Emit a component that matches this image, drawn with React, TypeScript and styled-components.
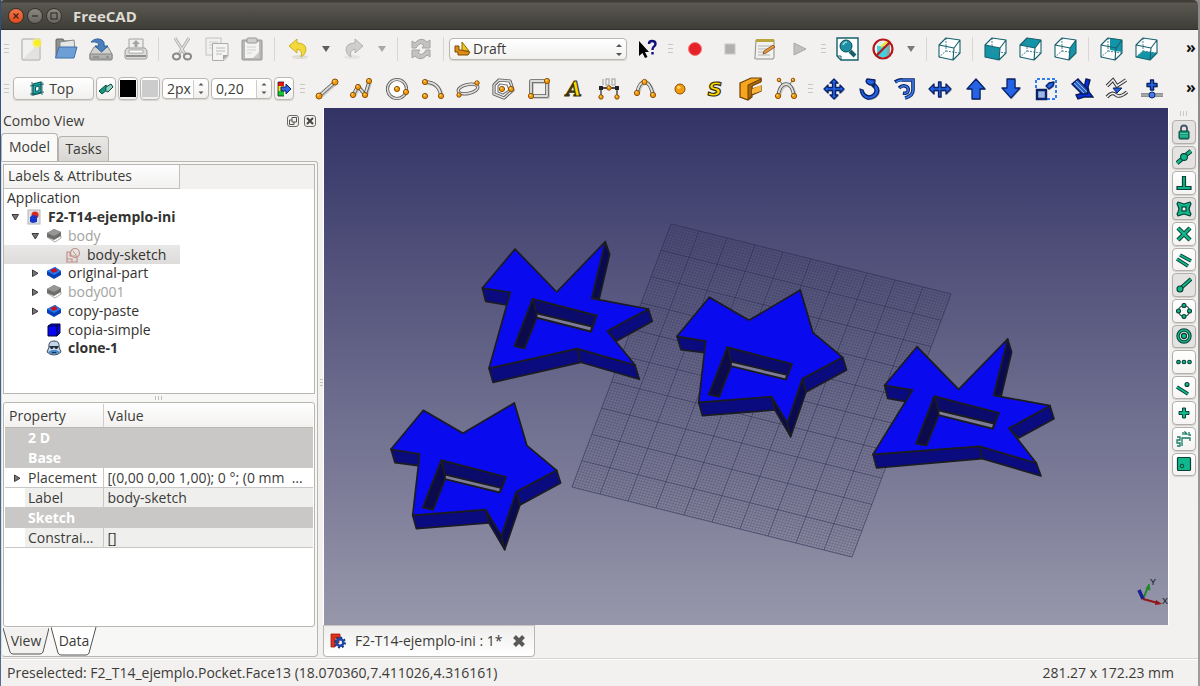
import React from 'react';
import styled, { createGlobalStyle, css } from 'styled-components';

const GlobalStyle = createGlobalStyle`
  * { box-sizing: border-box; }
  body {
    margin: 0;
    font-family: "Open Sans", "Noto Sans", sans-serif;
    font-size: 14px;
    line-height: 20px;
    color: #3c3b37;
  }
  button, input, select { font: inherit; color: inherit; }
`;

/* ---------- window frame ---------- */

const Window = styled.div`
  position: relative;
  display: flex;
  flex-direction: column;
  min-height: 100vh;
  padding-right: 2px;
  background: linear-gradient(#8a8a88, #9c9c9a);

  &::before {
    content: "";
    position: absolute;
    inset: 0 auto 0 0;
    width: 1px;
    background: linear-gradient(#2b4f82, #4f6f92);
  }
`;

const TitleBar = styled.header`
  display: flex;
  align-items: center;
  height: 30px;
  padding: 3px 8px 0;
  gap: 3px;
  border-bottom: 1px solid #2f2e2a;
  border-radius: 5px 5px 0 0;
  background: linear-gradient(#3f3e38 0, #3f3e38 2px, #5a5850 3px, #3f3e39 28px);
`;

const WindowButton = styled.button<{ $close?: boolean }>`
  display: grid;
  place-items: center;
  width: 16px;
  height: 16px;
  padding: 0;
  border: 1px solid #33322e;
  border-radius: 50%;
  background: ${(p) => (p.$close ? 'linear-gradient(#f4764c, #df4a1c)' : 'linear-gradient(#8b897f, #66645c)')};
`;

const Title = styled.h1`
  margin: 0 0 0 8px;
  font-size: 15px;
  line-height: 20px;
  font-weight: 700;
  color: #dfdbd2;
`;

/* ---------- toolbars ---------- */

const ToolBar = styled.div`
  display: flex;
  align-items: center;
  height: 39px;
  background: #f2f1f0;
`;

const MainToolBar = styled(ToolBar)`
  padding-bottom: 2px;
`;

const Tool = styled.button`
  display: grid;
  place-items: center;
  flex: none;
  width: 35px;
  height: 30px;
  padding: 0;
  border: 0;
  background: none;
`;

const ToolGroup = styled.div<{ $count: number }>`
  display: flex;
  flex: ${(p) => p.$count} 1 0;
  min-width: 0;

  ${Tool} {
    flex: 1 1 0;
    width: auto;
  }
`;

const Drop = styled(Tool)`
  width: 21px;
`;

const Separator = styled.span`
  flex: none;
  width: 1px;
  height: 24px;
  margin: 0 5px;
  background: #d9d6d3;
`;

const Grip = styled.span`
  flex: none;
  width: 5px;
  height: 10px;
  margin: 0 4px;
  background: repeating-linear-gradient(#c9c6c3 0, #c9c6c3 1px, transparent 1px, transparent 4px);
`;

const Overflow = styled.button`
  flex: none;
  width: 28px;
  margin-left: auto;
  padding: 0 0 3px 16px;
  border: 0;
  background: none;
  font-size: 16px;
  font-weight: 700;
  text-align: left;
  color: #111;
`;

const field = css`
  border: 1px solid #bab6b2;
  border-radius: 4px;
  background: linear-gradient(#ffffff, #f1f0ef);
  box-shadow: 0 1px 1px #d6d3d0;
`;

const Combo = styled.div`
  position: relative;
  flex: none;
  width: 178px;
  margin-right: 2px;

  select {
    ${field}
    width: 100%;
    height: 22px;
    padding: 0 20px 0 23px;
    line-height: 20px;
    appearance: none;
  }
  svg:first-child { position: absolute; left: 5px; top: 3px; }
  svg:last-child { position: absolute; right: 4px; top: 5px; }
  svg { pointer-events: none; }
`;

const PlaneButton = styled.button`
  ${field}
  display: flex;
  align-items: center;
  justify-content: center;
  gap: 4px;
  width: 81px;
  height: 23px;
  margin-right: 2px;
  padding: 0 4px 0 0;
`;

const SmallButton = styled.button`
  ${field}
  display: grid;
  place-items: center;
  width: 20px;
  height: 23px;
  margin-right: 2px;
  padding: 0;
`;

const Swatch = styled.span<{ $color: string }>`
  width: 16px;
  height: 17px;
  background: ${(p) => p.$color};
`;

const Spin = styled.label<{ $width: number }>`
  ${field}
  display: flex;
  align-items: center;
  width: ${(p) => p.$width}px;
  height: 21px;
  margin-right: 2px;

  input {
    flex: 1;
    min-width: 0;
    height: 18px;
    padding: 0 0 0 4px;
    border: 0;
    border-right: 1px solid #cfccc9;
    background: #fff;
    border-radius: 4px 0 0 4px;
    outline: 0;
  }
  svg { flex: none; margin: 0 3px; }
`;

/* ---------- work area ---------- */

const Body = styled.main`
  display: flex;
  flex: 1;
  background: #f2f1f0;
`;

const Dock = styled.section`
  display: flex;
  flex-direction: column;
  flex: none;
  width: 318px;
  padding-left: 1px;
`;

const DockHeader = styled.div`
  display: flex;
  align-items: center;
  gap: 5px;
  height: 25px;
  padding: 0 2px;

  h2 {
    flex: 1;
    margin: 0;
    font-size: 14px;
    line-height: 20px;
    font-weight: 400;
  }
`;

const DockButton = styled.button`
  display: grid;
  place-items: center;
  width: 12px;
  height: 12px;
  padding: 0;
  border: 1px solid #6d6b67;
  border-radius: 3px;
  background: none;
`;

const Tabs = styled.div`
  display: flex;
  align-items: flex-end;
  height: 28px;
`;

const Tab = styled.button<{ $active?: boolean }>`
  width: ${(p) => (p.$active ? 57 : 51)}px;
  height: ${(p) => (p.$active ? 28 : 25)}px;
  padding: 0 0 1px;
  border: 1px solid #b5b2ae;
  border-bottom: 0;
  border-radius: 4px 4px 0 0;
  background: ${(p) => (p.$active ? '#f9f9f8' : 'linear-gradient(#e9e8e6, #d9d7d4)')};
`;

const Pane = styled.div`
  display: flex;
  flex-direction: column;
  flex: 1;
  margin-bottom: 1px;
  padding: 2px 2px 0 1px;
  border: 1px solid #b9b6b2;
  border-left-color: #dedcda;
  border-radius: 0 3px 4px 4px;
  background: #f7f7f6;
`;

const TreeBox = styled.div`
  flex: 232 1 0;
  border: 1px solid #b9b6b2;
  background: #fff;
`;

const TreeHeader = styled.div`
  height: 24px;
  background: #f2f1f0;

  span {
    display: block;
    width: 176px;
    height: 24px;
    padding: 1px 4px;
    border: solid #c4c1bd;
    border-width: 0 1px 1px 0;
    background: linear-gradient(#fefefe, #f2f1f0);
  }
`;

const Tree = styled.ul`
  margin: 0;
  padding: 0;
  list-style: none;
`;

type Tone = 'normal' | 'bold' | 'dim';

const TreeRow = styled.li<{ $indent: number; $tone?: Tone; $selected?: boolean }>`
  display: flex;
  align-items: center;
  width: 176px;
  height: 19px;
  padding-left: ${(p) => p.$indent}px;
  white-space: nowrap;
  line-height: 18px;
  font-weight: ${(p) => (p.$tone === 'bold' ? 700 : 400)};
  color: ${(p) => (p.$tone === 'dim' ? '#a3a2a0' : '#333230')};
  background: ${(p) => (p.$selected ? 'linear-gradient(#e9e8e6, #dedcda)' : 'none')};

  &:nth-child(4n + 1) { height: 18px; }
`;

const Expander = styled.button`
  display: grid;
  place-items: center;
  width: 12px;
  height: 16px;
  margin-right: 5px;
  padding: 0;
  border: 0;
  background: none;
`;

const NodeIcon = styled.span`
  display: grid;
  width: 16px;
  margin-right: 6px;
`;

const Splitter = styled.div`
  display: flex;
  align-items: center;
  justify-content: center;
  height: 8px;

  span {
    width: 8px;
    height: 4px;
    background: repeating-linear-gradient(90deg, #c2bfbb 0, #c2bfbb 1px, transparent 1px, transparent 3px);
  }
`;

const PropertyBox = styled.div`
  flex: 225 1 0;
  padding: 1px;
  border: 1px solid #b9b6b2;
  border-radius: 3px;
  background: #fff;
`;

const PropertyTable = styled.table`
  width: 100%;
  border-collapse: collapse;
  table-layout: fixed;

  th, td {
    height: 20px;
    padding: 0 0 0 4px;
    overflow: hidden;
    font-weight: 400;
    line-height: 18px;
    text-align: left;
    white-space: nowrap;
    text-overflow: ellipsis;
  }
  thead th {
    height: 24px;
    padding-top: 1px;
    border-bottom: 1px solid #b9b6b2;
    background: linear-gradient(#fefefe, #f2f1f0);
  }
  thead th:first-child { width: 98px; border-right: 1px solid #cfccc9; }
`;

const GroupRow = styled.tr`
  th {
    padding-left: 23px;
    border: 0;
    background: #c9c8c6;
    color: #fff;
    font-weight: 700;
  }
`;

const PropertyRow = styled.tr<{ $shade?: boolean }>`
  background: ${(p) => (p.$shade ? 'linear-gradient(90deg, #fff 20px, #efefee 20px)' : '#fff')};

  th {
    border-right: 1px solid #c9c8c6;
    border-bottom: 1px solid #c9c8c6;
  }
  td {
    border-bottom: 1px solid #c9c8c6;
    padding-right: 8px;
  }
`;

const NameCell = styled.div`
  display: flex;
  align-items: center;

  span {
    overflow: hidden;
    text-overflow: ellipsis;
  }
`;

const ToggleSlot = styled.i`
  display: grid;
  flex: none;
  width: 19px;
  padding-left: 4px;
`;

const BottomTabs = styled.div`
  display: flex;
  height: 29px;
`;

const BottomTab = styled.button`
  position: relative;
  width: 46px;
  margin-right: 2px;
  padding: 0 0 2px;
  border: 0;
  background: none;
  isolation: isolate;

  svg { position: absolute; left: 0; top: 0; z-index: -1; }
`;

const Handle = styled.div`
  flex: none;
  display: grid;
  align-items: center;
  width: 5px;
  padding-left: 2px;

  span {
    width: 3px;
    height: 8px;
    background: repeating-linear-gradient(#c2bfbb 0, #c2bfbb 1px, transparent 1px, transparent 3px);
  }
`;

const ViewColumn = styled.section`
  display: flex;
  flex-direction: column;
  flex: 1;
  min-width: 0;
`;

const Viewport = styled.div`
  display: flex;
  flex: 1;
  min-height: 0;
  border-left: 1px solid #fff;
  border-right: 1px solid #fff;
  background: linear-gradient(#333366, #9797ab);

  svg { display: block; width: 100%; }
`;

const DocumentTabs = styled.div`
  height: 33px;
  padding-bottom: 1px;
`;

const DocumentTab = styled.div`
  display: flex;
  align-items: center;
  gap: 9px;
  width: 212px;
  height: 32px;
  padding-left: 6px;
  border: 1px solid #bab6b2;
  border-top-color: #c9c6c3;
  border-radius: 0 0 4px 4px;
  background: linear-gradient(#efeeed, #fff);
  white-space: nowrap;

  button {
    display: grid;
    padding: 0;
    border: 0;
    background: none;
  }
`;

const SnapBar = styled.aside`
  display: flex;
  flex-direction: column;
  align-items: center;
  flex: none;
  width: 29px;
  padding-top: 3px;
`;

const SnapGrip = styled.span`
  flex: none;
  width: 8px;
  height: 5px;
  margin-bottom: 4px;
  background: repeating-linear-gradient(90deg, #c9c6c3 0, #c9c6c3 1px, transparent 1px, transparent 3px);
`;

const SnapList = styled.div`
  display: flex;
  flex-direction: column;
  gap: 2px;
  height: 356px;
`;

const SnapButton = styled.button<{ $on?: boolean }>`
  display: grid;
  place-items: center;
  flex: 1 1 0;
  width: 24px;
  min-height: 0;
  padding: 0;
  border: 1px solid #b3afab;
  border-radius: 4px;
  background: ${(p) => (p.$on ? '#e5e3e1' : 'linear-gradient(#fff, #f5f4f3)')};
  box-shadow: 0 1px 1px #d3d0cd;
`;

const StatusBar = styled.footer`
  display: flex;
  align-items: center;
  justify-content: space-between;
  height: 28px;
  padding: 1px 24px 0 7px;
  border-top: 1px solid #d6d3d0;
  box-shadow: inset 0 1px #fff;
  background: #f2f1f0;
`;

/* ---------- drawing helpers ---------- */

type Pt = [number, number];

const Svg = ({ size = 24, children }: { size?: number; children: React.ReactNode }) => (
  <svg width={size} height={size} viewBox={`0 0 ${size} ${size}`} fill="none" aria-hidden="true">
    {children}
  </svg>
);

const Tube = ({ d }: { d: string }) => (
  <g fill="none" strokeLinejoin="round">
    <path d={d} stroke="#c9c8c6" strokeWidth="4" transform="translate(1 1)" />
    <path d={d} stroke="#5a5a58" strokeWidth="3.600" />
    <path d={d} stroke="#dededc" strokeWidth="1.800" />
  </g>
);

const Dots = ({ at, r = 2.6 }: { at: Pt[]; r?: number }) => (
  <>
    {at.map(([x, y], i) => (
      <g key={i}>
        <circle cx={x} cy={y} r={r} fill="#f59a0a" stroke="#8a5206" strokeWidth="1" />
        <circle cx={x - r / 4} cy={y - r / 3} r={r / 3} fill="#ffd37a" />
      </g>
    ))}
  </>
);

const Blue = ({ d }: { d: string }) => (
  <>
    <path d={d} transform="translate(1 1)" fill="#8c8c90" opacity=".6" />
    <path d={d} fill="#2463e4" stroke="#0a2268" strokeWidth="1.3" strokeLinejoin="round" />
  </>
);

const cubeFaces = {
  none: '',
  front: 'M1 8L16 11L15 23L1 20Z',
  top: 'M8 1L22 3L16 11L1 8Z',
  right: 'M22 3L22 16L15 23L16 11Z',
  rear: 'M10 1L22 3L22 15L10 13Z',
  bottom: 'M8 14L22 16L15 23L1 20Z',
};

const Cube = ({ face }: { face: keyof typeof cubeFaces }) => (
  <Svg>
    <path d="M8 1L22 3L22 16L15 23L1 20L1 8Z" fill="#fff" />
    {face !== 'none' && <path d={cubeFaces[face]} fill="#1295a8" />}
    <path d="M8 1V14L1 20M8 14L22 16" stroke="#4b8790" strokeWidth="1" strokeDasharray="2 1" />
    <path d="M8 1L22 3L22 16L15 23L1 20L1 8ZM1 8L16 11L22 3M16 11L15 23" stroke="#16606c" strokeWidth="1.1" strokeLinejoin="round" />
  </Svg>
);

const Arrow = ({ color = '#5f5e5b' }: { color?: string }) => (
  <svg width="8" height="6" viewBox="0 0 8 6" aria-hidden="true">
    <path d="M0 0H8L4 6Z" fill={color} />
  </svg>
);

const UpDown = () => (
  <svg width="8" height="13" viewBox="0 0 8 13" aria-hidden="true">
    <path d="M1.500 3.500L4 1L6.500 3.500ZM1.500 9.500L4 12L6.500 9.500Z" fill="#55534f" />
  </svg>
);

/* ---------- icon tables ---------- */

const fileTools: [string, React.ReactNode][] = [
  ['New', <Svg><rect x="3" y="2" width="18" height="21" rx="1" fill="#f1f1f0" stroke="#a7a6a3" /><path d="M4 22L20 6V22Z" fill="#e2e2e0" /><circle cx="18" cy="6" r="5" fill="#f8f06a" opacity=".7" /><circle cx="18" cy="6" r="3" fill="#fbef1d" /></Svg>],
  ['Open', <Svg><path d="M2 20L2 3Q2 2 3 2H9L10 4H18V12" fill="#8f8f8c" stroke="#666" /><path d="M6 5L20 3L21 13H6Z" fill="#e6e6e4" stroke="#8a8a88" /><path d="M5 10H23L20 21H1.500Z" fill="#6d9fd6" stroke="#3f6fa8" /></Svg>],
  ['Save', <Svg><path d="M5 10H19L23 17V22Q23 23 22 23H2Q1 23 1 22V17Z" fill="#d2d2cf" stroke="#888" /><path d="M1 17H23V22H1Z" fill="#b1b1ad" stroke="#888" /><path d="M4 20H10M17 20H20" stroke="#777" /><path d="M2 5Q7 0 13 3Q16 5 15 9H19L12.500 15L6 9H10Q10 4 2 5Z" fill="#4a80bd" stroke="#2d5d94" /></Svg>],
  ['Print', <Svg><path d="M5 2H19V13H5Z" fill="#eee" stroke="#a3a3a1" /><path d="M12 3L8 7H10.500V10H13.500V7H16Z" fill="#a3a3a1" /><path d="M3 11H21L23 14V20Q23 22 21 22H3Q1 22 1 20V14Z" fill="#dcdcda" stroke="#999" /><path d="M5 13H19V16H5Z" fill="#fff" stroke="#aaa" /><path d="M2 19H22" stroke="#8f8f8d" strokeWidth="2" /></Svg>],
];

const editTools: [string, React.ReactNode][] = [
  ['Cut', <Svg><path d="M5 1L15 17M19 1L9 17" stroke="#aaa9a7" strokeWidth="3" /><path d="M5 1L15 17M19 1L9 17" stroke="#e4e4e2" strokeWidth="1.4" /><ellipse cx="6.500" cy="19.500" rx="3.600" ry="3" stroke="#8b8a88" strokeWidth="2" /><ellipse cx="17.500" cy="19.500" rx="3.600" ry="3" stroke="#8b8a88" strokeWidth="2" /></Svg>],
  ['Copy', <Svg><rect x="1" y="1" width="15" height="17" fill="#f0f0ee" stroke="#c3c2c0" /><path d="M4 5H13M4 8H13M4 11H10" stroke="#ccc" /><path d="M7.500 6.500H23V19L19 23.500H7.500Z" fill="#f4f4f3" stroke="#adaba9" /><path d="M11 11H20M11 14H20M11 17H17" stroke="#bdbcba" /><path d="M23 18L18 23V18Z" fill="#a4a3a1" /></Svg>],
  ['Paste', <Svg><rect x="2" y="3" width="20" height="20" rx="1" fill="#b9b8b6" stroke="#979694" /><path d="M5 5H19V21H5Z" fill="#f3f3f2" /><path d="M19 15V21H13Z" fill="#c9c9c7" /><rect x="7" y="1" width="10" height="5" rx="1" fill="#cfcfcd" stroke="#999" /><path d="M7 10H16M7 13H16M7 16H12" stroke="#d2d2d0" /></Svg>],
];

const draftTools: [string, React.ReactNode][] = [
  ['Line', <Svg><Tube d="M4 19L20 5" /><Dots at={[[4, 19], [20, 5]]} r={3} /></Svg>],
  ['Wire', <Svg><Tube d="M3 18L8 9L15 18L19 5" /><Dots at={[[3, 18], [8, 10], [15, 18], [19, 4]]} /></Svg>],
  ['Circle', <Svg><circle cx="12" cy="12" r="9.500" stroke="#5a5a58" strokeWidth="3.200" fill="#fff" /><circle cx="12" cy="12" r="9.500" stroke="#dededc" strokeWidth="1.600" /><Dots at={[[12, 12], [21, 15]]} /></Svg>],
  ['Arc', <Svg><Tube d="M4 5Q18 5 20 19" /><Dots at={[[4, 5], [20, 19], [4, 19]]} /></Svg>],
  ['Ellipse', <Svg><g transform="rotate(-12 12 12)"><ellipse cx="12" cy="12" rx="10" ry="4.500" stroke="#5a5a58" strokeWidth="3.200" /><ellipse cx="12" cy="12" rx="10" ry="4.500" stroke="#dededc" strokeWidth="1.600" /></g><Dots at={[[21, 6], [3, 18]]} r={2.200} /></Svg>],
  ['Polygon', <Svg><path d="M8 3L19 4L22 13L13 21L3 17L3 8Z" stroke="#5a5a58" strokeWidth="3.200" strokeLinejoin="round" fill="#fff" /><path d="M8 3L19 4L22 13L13 21L3 17L3 8Z" stroke="#dededc" strokeWidth="1.400" strokeLinejoin="round" /><path d="M9 7L16 8L18 13L12 17L7 15V9Z" stroke="#777" strokeWidth="1.200" /><Dots at={[[11, 12], [20, 12]]} /></Svg>],
  ['Rectangle', <Svg><Tube d="M4 4H20V19H4Z" /><Dots at={[[4, 19], [20, 4]]} /></Svg>],
  ['Text', <Svg><text x="12" y="19" textAnchor="middle" fontFamily="DejaVu Serif, serif" fontStyle="italic" fontWeight="700" fontSize="20" fill="#ffd900" stroke="#3a3208" strokeWidth="1.200">A</text></Svg>],
  ['Dimension', <Svg><path d="M4 11V20M20 11V20" stroke="#777" strokeWidth="2" /><path d="M4 11H20" stroke="#222" strokeWidth="1.600" /><path d="M6 2V8M9 2H12V8H9ZM15 2H18V8H15Z" stroke="#b5b5b2" strokeWidth="1.400" /><Dots at={[[4, 20], [20, 20], [12, 11]]} r={2.200} /><path d="M2 9H6V13H2ZM18 9H22V13H18Z" fill="#222" /></Svg>],
  ['B-spline', <Svg><Tube d="M4 16Q6 5 11.500 5Q17 5 20 18" /><Dots at={[[4, 16], [11.500, 5], [20, 18]]} /></Svg>],
  ['Point', <Svg><Dots at={[[12, 12]]} r={5} /></Svg>],
  ['ShapeString', <Svg><text x="12" y="19" textAnchor="middle" fontFamily="DejaVu Sans, sans-serif" fontStyle="italic" fontWeight="700" fontSize="20" fill="#ffd900" stroke="#3a3208" strokeWidth="1.200">S</text></Svg>],
  ['Facebinder', <Svg><path d="M1 6L12 1H22V4L13 8V12L22 9V14L13 18V20L9 23L1 20Z" fill="#f7a51c" stroke="#6b3f06" strokeWidth="1.200" /><path d="M9 8L22 2V5L13 9V18L9 23Z" fill="#a8660c" stroke="#6b3f06" /><path d="M13 12L22 8V14L13 17Z" fill="#f9b53c" /></Svg>],
  ['BezCurve', <Svg><path d="M5 3L9 8M19 3L15 8" stroke="#666" /><Tube d="M4 19Q6 7 12 7Q18 7 20 19" /><Dots at={[[4, 19], [20, 19]]} /><Dots at={[[5, 3], [19, 3]]} r={1.800} /></Svg>],
];

const modTools: [string, React.ReactNode][] = [
  ['Move', <Svg><Blue d="M12 2L16 6H13.500V10.500H18V8L22 12L18 16V13.500H13.500V18H16L12 22L8 18H10.500V13.500H6V16L2 12L6 8V10.500H10.500V6H8Z" /></Svg>],
  ['Rotate', <Svg><Blue d="M9 2L17 3L16 10L14 8Q9 8 8 4ZM16 6Q23 11 20 17Q16 23 9 22Q3 20 2 12L5 13Q6 18 11 19Q16 18 17 14Q17 11 14 9Z" /></Svg>],
  ['Offset', <Svg><path d="M2 5Q6 2 10 3H20V13Q20 19 12 21" stroke="#0a2268" strokeWidth="3.600" /><path d="M3 5Q6 3 10 3H20V13Q20 19 12 21" stroke="#3c7dea" strokeWidth="1.600" /><path d="M6 11Q9 8 12 9Q16 10 15 14Q14 17 10 16" stroke="#0a2268" strokeWidth="3.600" /><path d="M7 11Q9 8 12 9Q16 10 15 14Q14 17 11 16" stroke="#3c7dea" strokeWidth="1.600" /></Svg>],
  ['Trimex', <Svg><Blue d="M1 12L6 7V10.500H10.500V5H13V10.500H18V7L23 12L18 17V13.500H13V20H10.500V13.500H6V17Z" /></Svg>],
  ['Upgrade', <Svg><Blue d="M12 2L21 12H16V22H8V12H3Z" /></Svg>],
  ['Downgrade', <Svg><Blue d="M8 2H16V11H21L12 21L3 11H8Z" /></Svg>],
  ['Scale', <Svg><path d="M2 11V2H22V22H13" stroke="#2f7cf5" strokeWidth="2" strokeDasharray="3 2" /><path d="M3 13H12V22H3Z" fill="#9db6e6" stroke="#0a2268" strokeWidth="2.400" /><Blue d="M12 9L15 6L20 5L19 9L15 12Z" /></Svg>],
  ['Edit', <Svg><path d="M16 2L20 3L18 10L19 15L23 20L14 20L8 22L6 18L13 16Z" fill="#0b2fe0" stroke="#081b57" strokeWidth="1.400" /><path d="M2 7L8 2L18 13L17 17L12 17Z" fill="#2a62c8" stroke="#081b57" strokeWidth="1.400" /><path d="M4 6L14 16M6 4L17 15" stroke="#8fb4ef" /></Svg>],
  ['Wire to B-spline', <Svg><path d="M2 9L8 3L12 9L21 3M2 20Q7 14 11 18Q15 21 22 15" stroke="#333" strokeWidth="3.600" /><path d="M2 9L8 3L12 9L21 3M2 20Q7 14 11 18Q15 21 22 15" stroke="#eee" strokeWidth="1.600" /><path d="M8 11H17L12 16Z" fill="#1f5fe0" stroke="#0a2268" /></Svg>],
  ['Add point', <Svg><path d="M1 18H23" stroke="#777" strokeWidth="3.600" /><path d="M1 18H23" stroke="#bbb" strokeWidth="1.400" /><Blue d="M10.500 3H13.500V6.500H17V9.500H13.500V13H10.500V9.500H7V6.500H10.500Z" /><circle cx="12" cy="18" r="3" fill="#3d7ff0" stroke="#0a2268" /></Svg>],
];

const GreenLine = ({ d, w = 4.4 }: { d: string; w?: number }) => (
  <>
    <path d={d} stroke="#0a3f33" strokeWidth={w} />
    <path d={d} stroke="#10b78c" strokeWidth={w - 2} />
  </>
);

const GreenDots = ({ at, r = 2 }: { at: Pt[]; r?: number }) => (
  <>
    {at.map(([x, y], i) => (
      <circle key={i} cx={x} cy={y} r={r} fill="#10b78c" stroke="#0a3f33" strokeWidth="1.100" />
    ))}
  </>
);

const snaps: [string, boolean, React.ReactNode][] = [
  ['Snap lock', true, <Svg size={16}><path d="M5 8V4.500Q5 1.500 8 1.500Q11 1.500 11 4.500V8" stroke="#456" strokeWidth="1.800" /><rect x="3" y="7" width="10" height="8" rx="1" fill="#12977a" stroke="#0a3f33" /><path d="M4 9.500H12M4 12H12" stroke="#4cc9a8" /></Svg>],
  ['Snap midpoint', true, <Svg size={16}><GreenLine d="M1 14L6 10M10 6L15 2" /><GreenDots at={[[8, 8]]} r={3.400} /></Svg>],
  ['Snap perpendicular', false, <Svg size={16}><path d="M6.500 1.500H9.500V11.500H15V14.500H1V11.500H6.500Z" fill="#10b78c" stroke="#0a3f33" strokeWidth="1.200" /></Svg>],
  ['Snap grid', true, <Svg size={16}><path d="M2 1L5 2L8 3L11 2L14 1L15 3L14 5L13 8L14 11L15 13L14 15L11 14L8 13L5 14L2 15L1 13L2 11L3 8L2 5L1 3Z" fill="#10b78c" stroke="#0a3f33" strokeWidth="1.200" strokeLinejoin="round" /><rect x="6" y="6" width="4" height="4" fill="#f2f1f0" stroke="#0a3f33" strokeWidth="1.200" /></Svg>],
  ['Snap intersection', false, <Svg size={16}><GreenLine d="M2 2L14 14M14 2L2 14" /><path d="M3 3L13 13" stroke="#10b78c" strokeWidth="2.200" /></Svg>],
  ['Snap parallel', false, <Svg size={16}><GreenLine d="M4 3L15 9M1 7L12 14" w={3.600} /></Svg>],
  ['Snap endpoint', true, <Svg size={16}><GreenLine d="M5 11L15 2" w={3.800} /><GreenDots at={[[4, 12]]} r={3} /></Svg>],
  ['Snap angle', false, <Svg size={16}><circle cx="8" cy="8" r="5.500" stroke="#234b43" strokeWidth="1.200" /><GreenDots at={[[8, 2.500], [2.500, 8], [13.500, 8], [8, 13.500]]} /></Svg>],
  ['Snap center', true, <Svg size={16}><circle cx="8" cy="8" r="6" stroke="#0a3f33" strokeWidth="3.400" /><circle cx="8" cy="8" r="6" stroke="#10b78c" strokeWidth="1.400" /><GreenDots at={[[8, 8]]} r={2.600} /></Svg>],
  ['Snap extension', false, <Svg size={16}><GreenDots at={[[2.500, 8], [8, 8], [13.500, 8]]} r={1.800} /></Svg>],
  ['Snap near', false, <Svg size={16}><GreenLine d="M1 7L12 14" w={3.600} /><GreenDots at={[[11, 4.500]]} /></Svg>],
  ['Snap ortho', false, <Svg size={16}><path d="M6.500 3H9.500V6.500H13V9.500H9.500V13H6.500V9.500H3V6.500H6.500Z" fill="#10b78c" stroke="#0a3f33" /></Svg>],
  ['Snap dimensions', false, <Svg size={16}><path d="M6 15V7H14V10M1 6H4V9H1V12H4V15H1M7 4V1M9 4V1L11 3V4M13 1V4H15" stroke="#167a64" strokeWidth="1.300" /></Svg>],
  ['Snap working plane', false, <Svg size={16}><rect x="1.500" y="1.500" width="13" height="13" rx="1" fill="#10b78c" stroke="#0a3f33" strokeWidth="1.200" /><circle cx="6" cy="10" r="1.800" fill="#10b78c" stroke="#0a3f33" /></Svg>],
];

/* ---------- tree ---------- */

const icons = {
  doc: <Svg size={16}><rect x="2" y="1" width="12" height="14" fill="#e1e1e4" stroke="#b5b5ba" /><circle cx="9" cy="6" r="3.600" fill="#d42a1e" /><path d="M4 8L7 6L11 7V13L7 14L4 13Z" fill="#1638c8" /></Svg>,
  pad: <Svg size={16}><path d="M1 9L9 14L15 10V8" fill="#fff" stroke="#aaa" /><path d="M1 5L8 1L15 4V8L8 12L1 9Z" fill="#6e6e6c" /><path d="M1 5L8 1L15 4L8 8Z" fill="#979795" /></Svg>,
  sketch: <Svg size={16}><path d="M2 5V15H12V9H5V5ZM2 12H7V15" stroke="#c09089" strokeWidth="1.200" /><circle cx="10" cy="6" r="4.500" stroke="#c09089" strokeWidth="1.200" /><path d="M8 4L11 8" stroke="#c09089" /></Svg>,
  pocket: <Svg size={16}><path d="M1 6L9 2L15 6V10L8 14L1 10Z" fill="#0a3eb5" /><path d="M1 6L9 2L15 6L8 10Z" fill="#1d7df2" /><path d="M4 5L9 3L12 6L7 8Z" fill="#c51322" /></Svg>,
  solid: <Svg size={16}><path d="M2 4L5 2H14V11L11 14H2Z" fill="#0808f0" stroke="#05052e" /><path d="M2 4H11V14M11 4L14 2" stroke="#05052e" /></Svg>,
  clone: <Svg size={16}><path d="M3 7Q2 1 8 1Q14 1 13 7L15 12Q12 15 8 15Q4 15 1 12Z" fill="#c3d6ea" stroke="#3b4a5c" /><path d="M3 6H13L11 9H9.500L8 7L6.500 9H5Z" fill="#222d3a" /><path d="M2 12L6 10H10L14 12L11 14H5Z" fill="#4a86c4" /><path d="M6 12.500H10" stroke="#1d3550" /></Svg>,
};

type Node = { label: string; icon?: keyof typeof icons; indent: number; tone?: Tone; open?: boolean; selected?: boolean; leaf?: boolean };

const nodes: Node[] = [
  { label: 'Application', indent: 3, leaf: true },
  { label: 'F2-T14-ejemplo-ini', icon: 'doc', indent: 5, tone: 'bold', open: true },
  { label: 'body', icon: 'pad', indent: 25, tone: 'dim', open: true },
  { label: 'body-sketch', icon: 'sketch', indent: 61, selected: true, leaf: true },
  { label: 'original-part', icon: 'pocket', indent: 25, open: false },
  { label: 'body001', icon: 'pad', indent: 25, tone: 'dim', open: false },
  { label: 'copy-paste', icon: 'pocket', indent: 25, open: false },
  { label: 'copia-simple', icon: 'solid', indent: 42, leaf: true },
  { label: 'clone-1', icon: 'clone', indent: 42, tone: 'bold', leaf: true },
];

const Twisty = ({ open }: { open?: boolean }) => (
  <svg width="8" height="8" viewBox="0 0 8 8" aria-hidden="true">
    <path d={open ? 'M1 1.500H7.500L4.300 7Z' : 'M1.500 1V7.500L7 4.300Z'} fill="#777" stroke="#3c3b37" />
  </svg>
);

/* ---------- 3D scene ---------- */

const corner = { x: 347, y: 116 };
const across = { x: 280, y: 70 };
const down = { x: -99, y: 263 };

const gridLines = (step: number) => {
  let d = '';
  for (let i = 0; i <= 100; i += step) {
    const t = i / 100;
    const ax = corner.x + across.x * t;
    const ay = corner.y + across.y * t;
    const bx = corner.x + down.x * t;
    const by = corner.y + down.y * t;
    d += `M${ax} ${ay}l${down.x} ${down.y}M${bx} ${by}l${across.x} ${across.y}`;
  }
  return d;
};

type Solid = { face: string; sides: string[]; dark: string[]; pocket: string; wallTop: string; wallLeft: string; slot: string };

const sharpStar: Solid = {
  face: '135,87 260,216 406,65 365,235 535,267 412,333 495,435 321,386 57,445 121,217 37,204',
  sides: ['37,204 121,217 109,255 47,244', '57,445 321,386 332,427 69,487', '321,386 495,435 508,478 332,427', '535,267 547,304 440,363 412,333'],
  dark: ['406,65 419,103 388,235 365,235'],
  pocket: '188,237 380,287 363,335 200,293 163,385 134,378',
  wallTop: '188,237 380,287 366,320 200,280',
  wallLeft: '188,237 200,280 200,293 163,385 134,378',
  slot: '200,280 366,320 362,334 200,293',
};

const wideStar: Solid = {
  face: '148,82 267,151 421,60 459,188 548,262 427,326 382,458 335,380 116,397 137,213 51,199',
  sides: ['51,199 137,213 132,248 63,239', '116,397 335,380 345,420 127,437', '427,326 548,262 560,300 438,366'],
  dark: ['335,380 382,458 392,500 345,420', '427,326 438,366 392,500 382,458'],
  pocket: '202,232 396,282 378,328 213,288 177,380 147,373',
  wallTop: '202,232 396,282 383,316 213,275',
  wallLeft: '202,232 213,275 213,288 177,380 147,373',
  slot: '213,275 381,315 377,328 213,288',
};

const longStar: Solid = {
  face: '171,80 296,208 443,57 401,226 570,257 447,325 529,429 359,379 39,403 158,210 74,196',
  sides: ['74,196 158,210 136,244 83,235', '39,403 359,379 367,416 50,444', '359,379 529,429 543,468 367,416', '570,257 582,296 476,354 447,325'],
  dark: ['443,57 455,96 424,227 401,226'],
  pocket: '223,229 417,279 399,326 236,285 199,376 169,370',
  wallTop: '223,229 417,279 402,311 235,271',
  wallLeft: '223,229 235,271 236,285 199,376 169,370',
  slot: '235,271 402,311 398,326 236,285',
};

const Star = ({ x, y, solid }: { x: number; y: number; solid: Solid }) => (
  <g transform={`translate(${x} ${y}) scale(.3333)`} stroke="#1b1b22" strokeWidth="5" strokeLinejoin="round">
    {solid.sides.map((p) => <polygon key={p} points={p} fill="#0b0b80" />)}
    {solid.dark.map((p) => <polygon key={p} points={p} fill="#0a0a52" />)}
    <polygon points={solid.face} fill="#0a0aee" />
    <polygon points={solid.pocket} fill="#0a0a52" />
    <polygon points={solid.wallTop} fill="#0b0b6c" />
    <polygon points={solid.wallLeft} fill="#0a0a4c" />
    <polygon points={solid.slot} fill="#7d7d97" />
  </g>
);

const Scene = () => (
  <svg viewBox="0 0 844 517" role="img" aria-label="3D view">
    <path d={gridLines(1)} stroke="#22223f" strokeOpacity=".25" strokeWidth=".7" fill="none" />
    <path d={gridLines(10)} stroke="#2a2a50" strokeOpacity=".45" strokeWidth="1" fill="none" />
    <Star x={146} y={112} solid={sharpStar} />
    <Star x={336} y={162} solid={wideStar} />
    <Star x={536} y={212} solid={longStar} />
    <Star x={50} y={275} solid={wideStar} />
    <path d="M819 491L824 479" stroke="#1f8a2a" strokeWidth="2" />
    <path d="M822 481L825 476L826 482Z" fill="#1f8a2a" stroke="#1f8a2a" />
    <path d="M819 491L815 482" stroke="#1d1d94" strokeWidth="3.500" />
    <path d="M819 491L834 495" stroke="#8f1717" strokeWidth="2" />
    <path d="M832 492L838 496L831 497Z" fill="#8f1717" />
    <g fontFamily="Liberation Sans, sans-serif" fontSize="9" fill="#111">
      <text x="826" y="477">Y</text>
      <text x="838" y="496">X</text>
    </g>
  </svg>
);

/* ---------- application ---------- */

const renderTools = (tools: [string, React.ReactNode][]) =>
  tools.map(([name, icon]) => (
    <Tool key={name} aria-label={name}>{icon}</Tool>
  ));

export default function App() {
  return (
    <>
      <GlobalStyle />
      <Window>
        <TitleBar>
          <WindowButton $close aria-label="Close window">
            <svg width="8" height="8" viewBox="0 0 8 8"><path d="M1.500 1.500L6.500 6.500M6.500 1.500L1.500 6.500" stroke="#4a2214" strokeWidth="1.300" /></svg>
          </WindowButton>
          <WindowButton aria-label="Minimize">
            <svg width="8" height="8" viewBox="0 0 8 8"><path d="M1 4H7" stroke="#33322e" strokeWidth="1.300" /></svg>
          </WindowButton>
          <WindowButton aria-label="Maximize">
            <svg width="8" height="8" viewBox="0 0 8 8"><rect x="1" y="1" width="6" height="6" fill="none" stroke="#33322e" strokeWidth="1.200" /></svg>
          </WindowButton>
          <Title>FreeCAD</Title>
        </TitleBar>

        <MainToolBar role="toolbar" aria-label="File">
          <Grip />
          {renderTools(fileTools)}
          <Separator />
          {renderTools(editTools)}
          <Separator />
          <Tool aria-label="Undo"><Svg><ellipse cx="14" cy="20" rx="8" ry="2" fill="#dedcd9" /><path d="M3 9L11 2V6Q20 6 20 13Q20 17 15 20Q17 13 11 12V16Z" fill="#f3d83a" stroke="#cdb02a" /></Svg></Tool>
          <Drop aria-label="Undo list"><Arrow /></Drop>
          <Tool aria-label="Redo"><Svg><ellipse cx="10" cy="20" rx="8" ry="2" fill="#e6e4e2" /><path d="M21 9L13 2V6Q4 6 4 13Q4 17 9 20Q7 13 13 12V16Z" fill="#cfcecc" stroke="#b3b2b0" /></Svg></Tool>
          <Drop aria-label="Redo list"><Arrow color="#aaa8a5" /></Drop>
          <Separator />
          <Tool aria-label="Refresh"><Svg><path d="M3 11V4L6 6Q12 -1 18 5L21 3V11H13L15 8Q12 5 9 8L7 11ZM3 13H11L9 16Q12 19 15 16L17 13H21V20L18 18Q12 25 6 19L3 21Z" fill="#c4c3c1" stroke="#a5a4a2" /></Svg></Tool>
          <Separator />
          <Combo>
            <svg width="17" height="16" viewBox="0 0 17 16" aria-hidden="true">
              <path d="M8 1V10H15Z" fill="#f0c419" stroke="#8a6c08" /><path d="M1 5H5V9H7L16 11L14 14H4V11H1Z" fill="#e08c12" stroke="#7d4a05" />
            </svg>
            <select aria-label="Workbench" defaultValue="Draft"><option>Draft</option></select>
            <svg width="8" height="14" viewBox="0 0 8 14" aria-hidden="true"><path d="M1 4H7L4 1ZM1 10H7L4 13Z" fill="#55534f" /></svg>
          </Combo>
          <Tool aria-label="What's this?">
            <Svg><path d="M4 4V19L7.500 16L10 21L12.500 20L10 15H14Z" fill="#000" /><path d="M14 7Q14 4 17 4Q20.500 4 20.500 7Q20.500 9 18.500 10Q17.500 11 17.500 13M17.500 15V17.500" stroke="#10107a" strokeWidth="2.400" /></Svg>
          </Tool>
          <Grip />
          <Tool aria-label="Record macro"><Svg><circle cx="12" cy="12" r="6.500" fill="#e62129" stroke="#f5797c" /></Svg></Tool>
          <Tool aria-label="Stop"><Svg><rect x="7" y="7" width="10" height="10" fill="#b1b0ae" stroke="#cbcac8" /></Svg></Tool>
          <Tool aria-label="Macros">
            <Svg><path d="M3 3H21V21L20 22H3Q1 22 2 20Z" fill="#f1f1ef" stroke="#8d8d8a" /><path d="M3 2H21V5H3Z" fill="#b9a53c" /><path d="M5 9H18M5 12H14M5 15H11M5 18H17" stroke="#b5b5b2" /><path d="M10 17L11 14L20 8L22 10L13 16Z" fill="#e8973a" stroke="#7d4a16" strokeWidth=".8" /></Svg>
          </Tool>
          <Tool aria-label="Execute macro"><Svg><path d="M6 6L18 12L6 18Z" fill="#c1c0be" stroke="#a9a8a6" /></Svg></Tool>
          <Grip />
          <Tool aria-label="Fit all">
            <Svg><path d="M1 1H22V23H5L1 19Z" fill="#fff" stroke="#16606c" strokeWidth="1.400" /><path d="M1 19H5V23" stroke="#16606c" /><path d="M14 14L19 19" stroke="#16606c" strokeWidth="4" /><circle cx="10" cy="9" r="6" fill="#1d8fa3" stroke="#0c4854" /><path d="M7 8Q8 5 11 5" stroke="#9bd9e2" strokeWidth="1.600" /></Svg>
          </Tool>
          <Tool aria-label="Draw style">
            <Svg><path d="M6 9L10 5H19V17L16 20H6Z" fill="#43d0d8" /><path d="M16 9L19 6V17L16 20Z" fill="#8fa3a5" /><path d="M6 9H16L19 5H10Z" fill="#dff3f3" /><path d="M10 10L18 3" stroke="#f2e51e" strokeWidth="2" /><circle cx="12" cy="12" r="9.500" stroke="#b5161b" strokeWidth="2.200" /><path d="M5.500 18.500L18.500 5.500" stroke="#b5161b" strokeWidth="2.200" /></Svg>
          </Tool>
          <Drop aria-label="Draw style list"><Arrow color="#7b7976" /></Drop>
          <Separator />
          <Tool aria-label="Axonometric"><Cube face="none" /></Tool>
          <Separator />
          <Tool aria-label="Front"><Cube face="front" /></Tool>
          <Tool aria-label="Top view"><Cube face="top" /></Tool>
          <Tool aria-label="Right"><Cube face="right" /></Tool>
          <Separator />
          <Tool aria-label="Rear"><Cube face="rear" /></Tool>
          <Tool aria-label="Bottom"><Cube face="bottom" /></Tool>
          <Overflow aria-label="More tools">»</Overflow>
        </MainToolBar>

        <ToolBar role="toolbar" aria-label="Draft">
          <Grip />
          <PlaneButton>
            <Svg size={16}><path d="M4 3L12 1V12L4 14Z" fill="#1fb5b8" stroke="#0c5558" strokeWidth="1.200" /><path d="M6.500 6L10 5V9.500L6.500 10.500Z" fill="#fff" stroke="#0c5558" /><path d="M1 5L15 3M1 13L15 11M3 1V15M13 1V14" stroke="#0c5558" strokeWidth=".8" /></Svg>
            Top
          </PlaneButton>
          <SmallButton aria-label="Construction mode"><Svg size={16}><path d="M1 10L8 4L10 8L4 13Z" fill="#0f9a80" stroke="#08463c" /><path d="M8 6L13 3L15 6L10 11Q7 11 8 6Z" fill="#8fcfc0" stroke="#08463c" /></Svg></SmallButton>
          <SmallButton aria-label="Line color"><Swatch $color="#000" /></SmallButton>
          <SmallButton aria-label="Face color"><Swatch $color="#cccccc" /></SmallButton>
          <Spin $width={47}><input aria-label="Line width" defaultValue="2px" /><UpDown /></Spin>
          <Spin $width={61}><input aria-label="Scale factor" defaultValue="0,20" /><UpDown /></Spin>
          <SmallButton aria-label="Apply style"><Svg size={16}><path d="M2 1H8V5H2Z" fill="#e3161c" /><path d="M2 5H8V10H2Z" fill="#f6e313" /><path d="M2 10H8V15H2Z" fill="#18c22e" /><path d="M2 1V15M2 1H8M2 15H8" stroke="#222" strokeWidth=".8" /><path d="M5 6H10V3L15 8L10 13V10H5Z" fill="#3568e0" stroke="#0a2268" /></Svg></SmallButton>
          <Grip />
          <ToolGroup $count={14}>{renderTools(draftTools)}</ToolGroup>
          <Grip />
          <ToolGroup $count={10}>{renderTools(modTools)}</ToolGroup>
          <Overflow aria-label="More draft tools">»</Overflow>
        </ToolBar>

        <Body>
          <Dock>
            <DockHeader>
              <h2>Combo View</h2>
              <DockButton aria-label="Float panel"><svg width="8" height="8" viewBox="0 0 8 8" fill="none" stroke="#55534f"><path d="M3 .5H7.500V5H3ZM3 3H.5V7.500H5V5" /></svg></DockButton>
              <DockButton aria-label="Close panel"><svg width="8" height="8" viewBox="0 0 8 8"><path d="M1 1L7 7M7 1L1 7" stroke="#45443f" strokeWidth="2" /></svg></DockButton>
            </DockHeader>
            <Tabs>
              <Tab $active>Model</Tab>
              <Tab>Tasks</Tab>
            </Tabs>
            <Pane>
              <TreeBox>
                <TreeHeader><span>Labels &amp; Attributes</span></TreeHeader>
                <Tree>
                  {nodes.map((n) => (
                    <TreeRow key={n.label} $indent={n.indent} $tone={n.tone} $selected={n.selected}>
                      {!n.leaf && <Expander aria-label={`Toggle ${n.label}`}><Twisty open={n.open} /></Expander>}
                      {n.icon && <NodeIcon>{icons[n.icon]}</NodeIcon>}
                      {n.label}
                    </TreeRow>
                  ))}
                </Tree>
              </TreeBox>
              <Splitter><span /></Splitter>
              <PropertyBox>
                <PropertyTable>
                  <thead><tr><th>Property</th><th>Value</th></tr></thead>
                  <tbody>
                    <GroupRow><th colSpan={2}>2 D</th></GroupRow>
                    <GroupRow><th colSpan={2}>Base</th></GroupRow>
                    <PropertyRow>
                      <th><NameCell><ToggleSlot><Twisty /></ToggleSlot><span>Placement</span></NameCell></th>
                      <td>[(0,00 0,00 1,00); 0 °; (0 mm &nbsp;…</td>
                    </PropertyRow>
                    <PropertyRow $shade>
                      <th><NameCell><ToggleSlot /><span>Label</span></NameCell></th>
                      <td>body-sketch</td>
                    </PropertyRow>
                    <GroupRow><th colSpan={2}>Sketch</th></GroupRow>
                    <PropertyRow $shade>
                      <th><NameCell><ToggleSlot /><span>Constrai…</span></NameCell></th>
                      <td>[]</td>
                    </PropertyRow>
                  </tbody>
                </PropertyTable>
              </PropertyBox>
              <BottomTabs>
                <BottomTab>
                  <svg width="46" height="29" viewBox="0 0 46 29" fill="#f2f1f0" stroke="#55534f"><path d="M0 1L7 25Q8 27 10 27H37Q39 27 40 25L46 1" /></svg>
                  View
                </BottomTab>
                <BottomTab>
                  <svg width="46" height="29" viewBox="0 0 46 29" fill="#fff" stroke="#55534f"><path d="M0 0L7 26Q8 28 10 28H35Q37 28 38 26L45 0" /></svg>
                  Data
                </BottomTab>
              </BottomTabs>
            </Pane>
          </Dock>
          <Handle><span /></Handle>
          <ViewColumn>
            <Viewport><Scene /></Viewport>
            <DocumentTabs>
              <DocumentTab>
                <Svg size={16}><path d="M1 1H10V5H5V7H9V10H5V14H1Z" fill="#e0301c" stroke="#a01a0c" strokeWidth=".8" /><circle cx="10" cy="9.500" r="3.400" stroke="#1d49a8" strokeWidth="2.600" /><circle cx="10" cy="9.500" r="5.200" stroke="#12347e" strokeWidth="1.600" strokeDasharray="2 2" /></Svg>
                F2-T14-ejemplo-ini : 1*
                <button aria-label="Close document"><svg width="14" height="14" viewBox="0 0 14 14"><path d="M2.500 2.500L11.500 11.500M11.500 2.500L2.500 11.500" stroke="#5a5955" strokeWidth="4" /></svg></button>
              </DocumentTab>
            </DocumentTabs>
          </ViewColumn>
          <SnapBar>
            <SnapGrip />
            <SnapList>
              {snaps.map(([name, on, icon]) => (
                <SnapButton key={name} $on={on} aria-label={name} aria-pressed={on}>{icon}</SnapButton>
              ))}
            </SnapList>
          </SnapBar>
        </Body>

        <StatusBar>
          <span>Preselected: F2_T14_ejemplo.Pocket.Face13 (18.070360,7.411026,4.316161)</span>
          <span>281.27 x 172.23 mm</span>
        </StatusBar>
      </Window>
    </>
  );
}
